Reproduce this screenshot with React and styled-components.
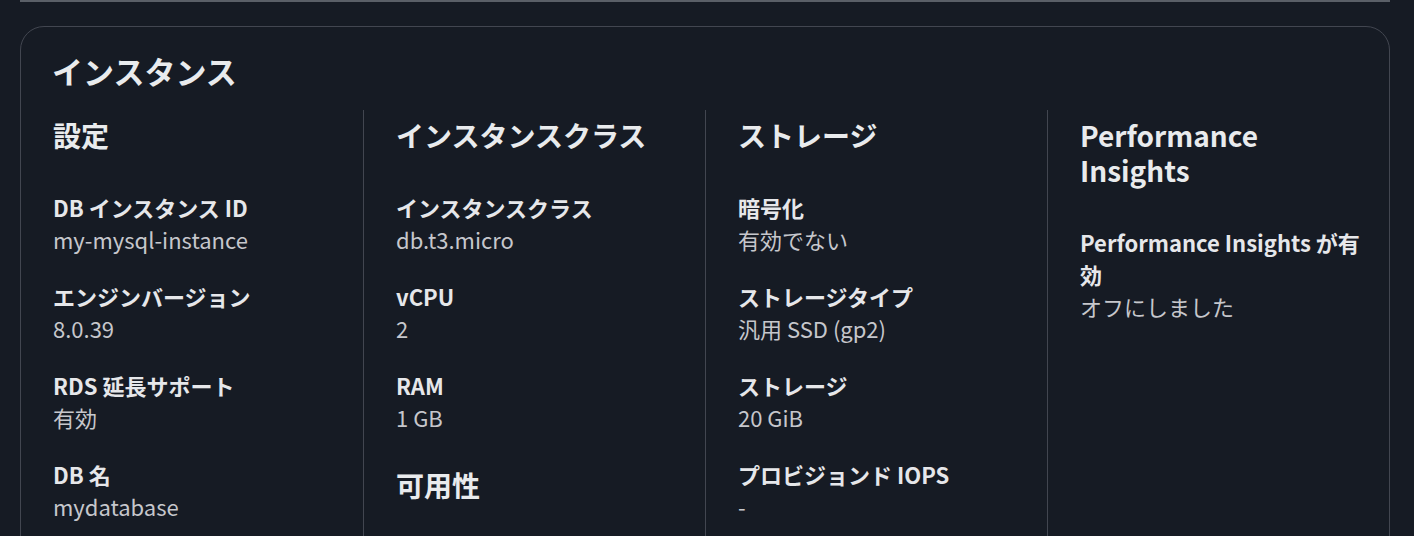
import styled, { createGlobalStyle } from "styled-components";

const GlobalStyle = createGlobalStyle`
  html, body {
    margin: 0;
    padding: 0;
    background: #161b24;
  }
  body {
    font-family: "Noto Sans CJK JP", "Noto Sans", sans-serif;
    color: #e6e7ea;
  }
`;

const columns = [
  {
    sections: [
      {
        title: "設定",
        items: [
          { label: "DB インスタンス ID", value: "my-mysql-instance" },
          { label: "エンジンバージョン", value: "8.0.39" },
          { label: "RDS 延長サポート", value: "有効" },
          { label: "DB 名", value: "mydatabase" },
        ],
      },
    ],
  },
  {
    sections: [
      {
        title: "インスタンスクラス",
        items: [
          { label: "インスタンスクラス", value: "db.t3.micro" },
          { label: "vCPU", value: "2" },
          { label: "RAM", value: "1 GB" },
        ],
      },
      { title: "可用性", items: [] },
    ],
  },
  {
    sections: [
      {
        title: "ストレージ",
        items: [
          { label: "暗号化", value: "有効でない" },
          { label: "ストレージタイプ", value: "汎用 SSD (gp2)" },
          { label: "ストレージ", value: "20 GiB" },
          { label: "プロビジョンド IOPS", value: "-" },
        ],
      },
    ],
  },
  {
    sections: [
      {
        title: "Performance Insights",
        items: [
          { label: "Performance Insights が有効", value: "オフにしました" },
        ],
      },
    ],
  },
];

function App() {
  return (
    <Page>
      <GlobalStyle />
      <PrevCardEdge />
      <Card>
        <CardTitle>インスタンス</CardTitle>
        <ColumnGrid>
          {columns.map((col, i) => (
            <Column key={i} $first={i === 0}>
              {col.sections.map((sec) => (
                <Section key={sec.title}>
                  <SectionTitle>{sec.title}</SectionTitle>
                  {sec.items.map((item) => (
                    <Item key={item.label}>
                      <Label>{item.label}</Label>
                      <Value>{item.value}</Value>
                    </Item>
                  ))}
                </Section>
              ))}
            </Column>
          ))}
        </ColumnGrid>
      </Card>
    </Page>
  );
}

const Page = styled.div`
  padding: 0 24px 0 20px;
  height: 536px;
  overflow: hidden;
`;

const PrevCardEdge = styled.div`
  height: 2px;
  background: #5a5f67;
  margin-bottom: 24px;
`;

const Card = styled.div`
  border: 1px solid #424650;
  border-radius: 24px;
  padding-top: 24px;
  min-height: 600px;
`;

const CardTitle = styled.h2`
  margin: 0 0 19px 31px;
  font-size: 31px;
  line-height: 40px;
  font-weight: 700;
  color: #e9ebed;
`;

const ColumnGrid = styled.div`
  display: grid;
  grid-template-columns: repeat(4, 1fr);
`;

const Column = styled.div`
  padding: 8px 20px 0 32px;
  border-left: ${(p) => (p.$first ? "none" : "1px solid #424650")};
  min-height: 500px;
`;

const Section = styled.div`
  & + & {
    margin-top: 35px;
  }
`;

const SectionTitle = styled.h3`
  margin: 0 0 38px;
  font-size: 28px;
  line-height: 35px;
  font-weight: 700;
  color: #e9ebed;
`;

const Item = styled.div`
  margin-bottom: 25px;
`;

const Label = styled.div`
  font-size: 22px;
  line-height: 32px;
  font-weight: 700;
  color: #e6e7ea;
`;

const Value = styled.div`
  font-size: 22px;
  line-height: 32px;
  color: #c6c7cc;
`;

export default App;
